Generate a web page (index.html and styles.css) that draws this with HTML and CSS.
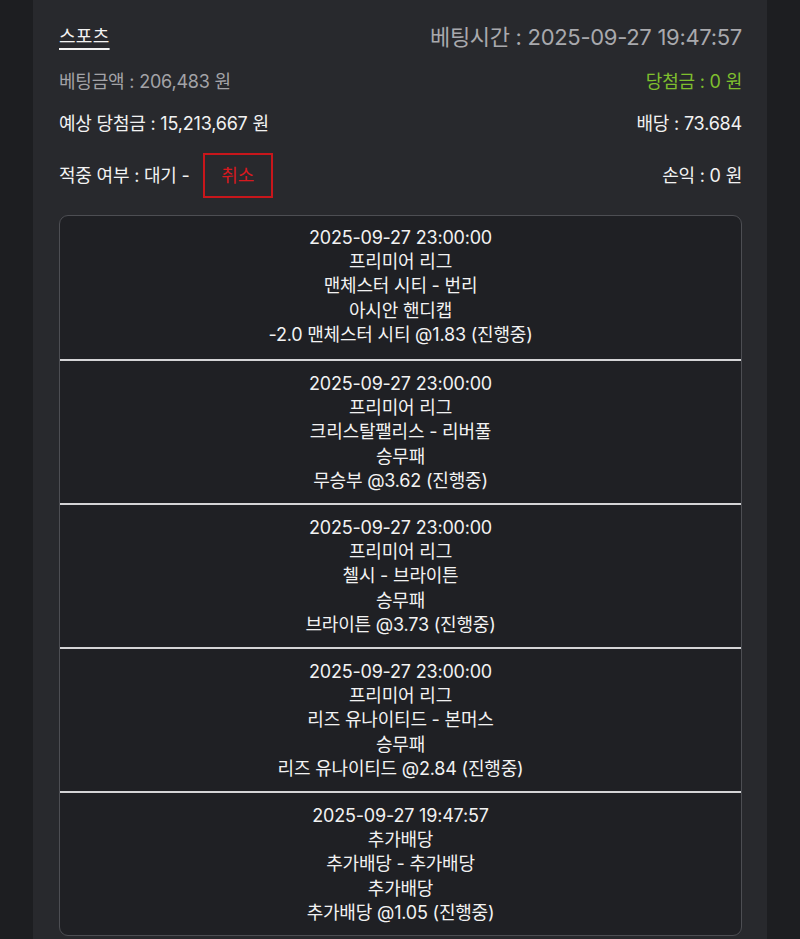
FILE: index.html
```html
<!DOCTYPE html>
<html lang="ko">
<head>
<meta charset="utf-8">
<link rel="stylesheet" href="styles.css">
</head>
<body>
<div class="panel">
  <div class="row head">
    <span class="title">스포츠</span>
    <span class="time">베팅시간 : 2025-09-27 19:47:57</span>
  </div>
  <div class="row r2">
    <span class="muted">베팅금액 : 206,483 원</span>
    <span class="win">당첨금 : 0 원</span>
  </div>
  <div class="row r3">
    <span>예상 당첨금 : 15,213,667 원</span>
    <span>배당 : 73.684</span>
  </div>
  <div class="row r4">
    <span class="status">적중 여부 : 대기 - <span class="cancel">취소</span></span>
    <span>손익 : 0 원</span>
  </div>
  <div class="card">
    <div class="bet">
      <div>2025-09-27 23:00:00</div>
      <div>프리미어 리그</div>
      <div>맨체스터 시티 - 번리</div>
      <div>아시안 핸디캡</div>
      <div>-2.0 맨체스터 시티 @1.83 (진행중)</div>
    </div>
    <div class="bet">
      <div>2025-09-27 23:00:00</div>
      <div>프리미어 리그</div>
      <div>크리스탈팰리스 - 리버풀</div>
      <div>승무패</div>
      <div>무승부 @3.62 (진행중)</div>
    </div>
    <div class="bet">
      <div>2025-09-27 23:00:00</div>
      <div>프리미어 리그</div>
      <div>첼시 - 브라이튼</div>
      <div>승무패</div>
      <div>브라이튼 @3.73 (진행중)</div>
    </div>
    <div class="bet">
      <div>2025-09-27 23:00:00</div>
      <div>프리미어 리그</div>
      <div>리즈 유나이티드 - 본머스</div>
      <div>승무패</div>
      <div>리즈 유나이티드 @2.84 (진행중)</div>
    </div>
    <div class="bet">
      <div>2025-09-27 19:47:57</div>
      <div>추가배당</div>
      <div>추가배당 - 추가배당</div>
      <div>추가배당</div>
      <div>추가배당 @1.05 (진행중)</div>
    </div>
  </div>
</div>
</body>
</html>
```
FILE: styles.css
```css
html, body {
  margin: 0;
  padding: 0;
  background: #1d1e21;
}
body {
  font-family: Inter, "Noto Sans CJK KR", sans-serif;
  color: #f2f2f2;
  font-size: 18px;
  letter-spacing: -0.2px;
}
.panel {
  width: 734px;
  margin: 0 auto;
  background: #28292d;
  box-sizing: border-box;
  padding: 20px 25px 0 26px;
  min-height: 939px;
}
.row {
  display: flex;
  justify-content: space-between;
  align-items: center;
  line-height: 24px;
}
.head {
  height: 34px;
}
.title {
  text-decoration: underline;
  text-decoration-thickness: 2px;
  text-underline-offset: 5px;
  letter-spacing: 0.3px;
}
.time {
  font-size: 22px;
  color: #a9a9ad;
  letter-spacing: -0.3px;
}
.r2 { margin-top: 16px; }
.r3 { margin-top: 18px; }
.r4 { margin-top: 17px; height: 45px; }
.muted { color: #a3a3a7; }
.win { color: #7fbf2e; }
.status {
  display: flex;
  align-items: center;
}
.cancel {
  display: inline-flex;
  align-items: center;
  justify-content: center;
  width: 66px;
  height: 41px;
  margin-left: 13px;
  border: 2px solid #c8161b;
  color: #d8191f;
}
.card {
  margin-top: 17px;
  background: #1f2024;
  border: 1px solid #4d4e53;
  border-radius: 9px;
  overflow: hidden;
}
.bet {
  text-align: center;
  padding: 11px 0 10px;
  line-height: 24.2px;
  border-top: 2px solid #d4d4d6;
}
.bet:first-child {
  border-top: none;
  padding: 10px 0 12px;
}
```
